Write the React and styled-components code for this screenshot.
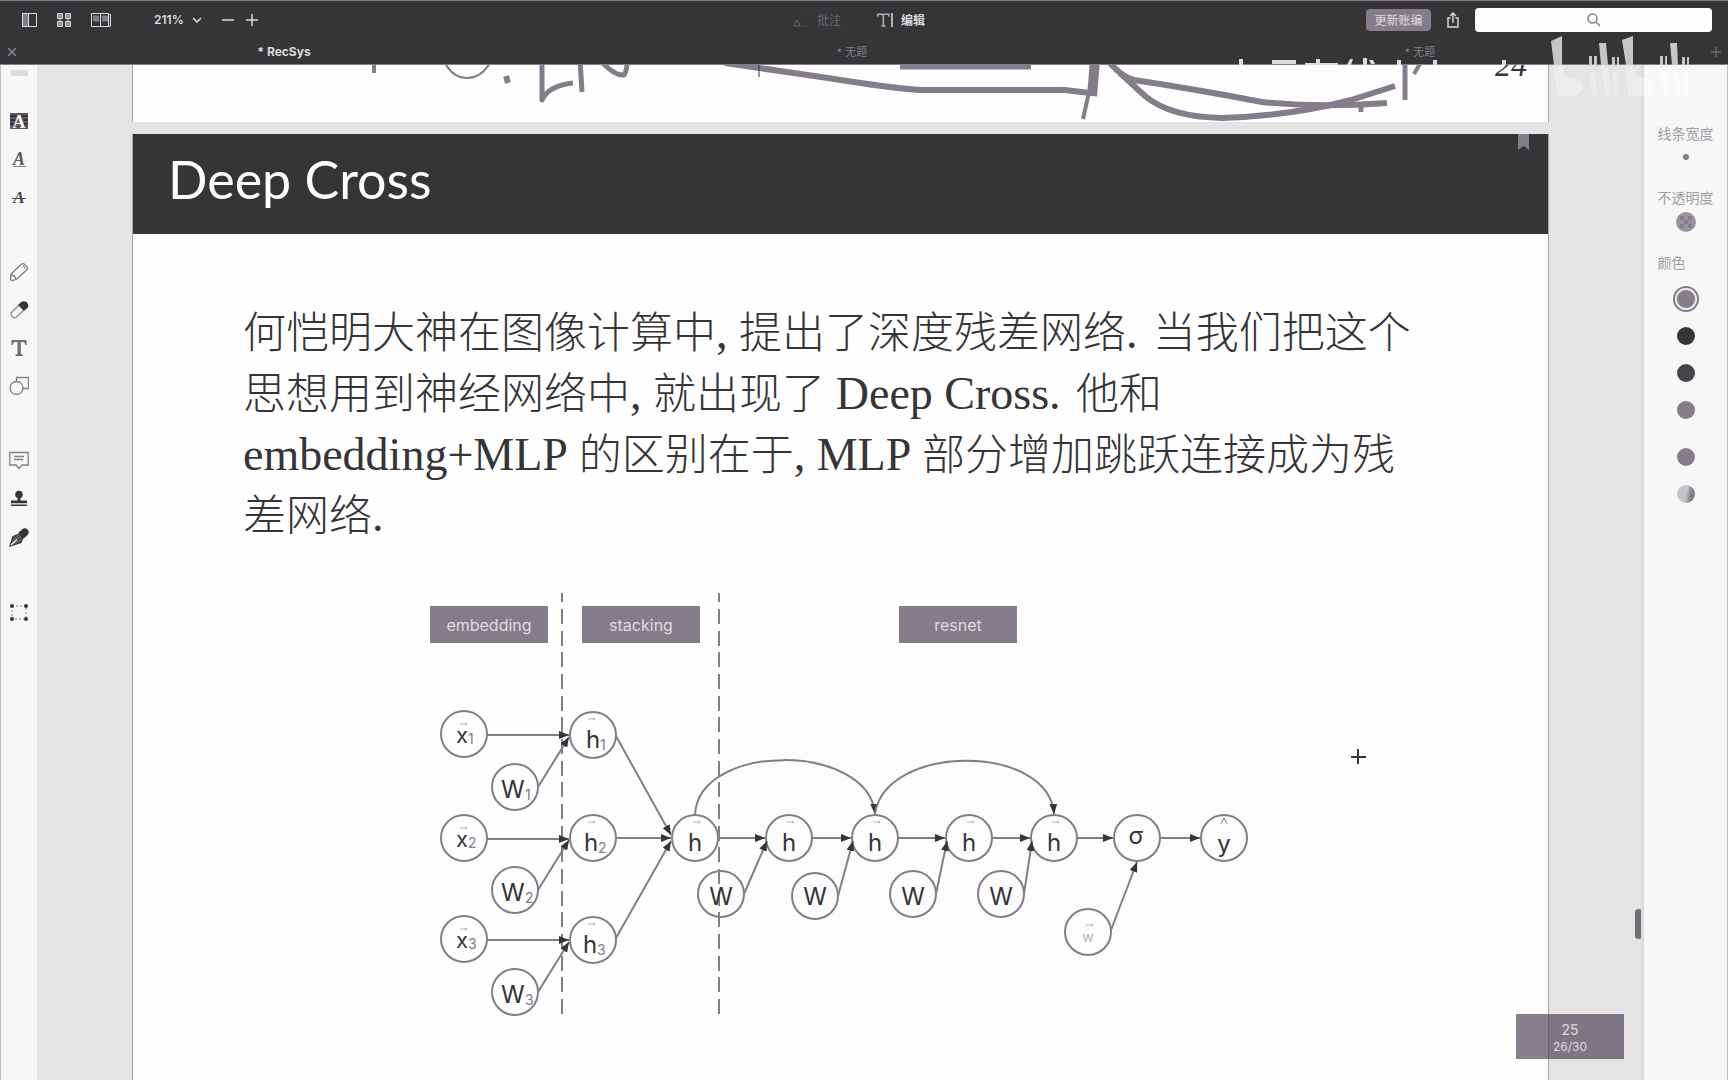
import React from "react";
import styled, { createGlobalStyle } from "styled-components";

const ink = "#353436";
const mauve = "#857c8a";
const ui = `Inter, Roboto, "Noto Sans CJK SC", sans-serif`;

const Global = createGlobalStyle`
  * { box-sizing: border-box; }
  body { margin: 0; background: ${ink}; font-family: ${ui}; color: ${ink}; }
  button { border: 0; padding: 0; background: none; font: inherit; color: inherit; cursor: pointer; }
  svg { display: block; flex: none; }
`;

const Window = styled.div`
  position: relative;
  display: flex;
  flex-direction: column;
  height: 100vh;
  overflow: hidden;
`;

const Toolbar = styled.header`
  display: grid;
  grid-template-columns: 1fr auto 1fr;
  align-items: center;
  height: 40px;
  flex: none;
  padding: 0 16px 2px 22px;
  border-top: 1px solid ${mauve};
  background: ${ink};
  color: #dcdcdc;
`;

const ToolGroup = styled.div`
  display: flex;
  align-items: center;
  justify-content: ${(p) => p.$justify || "flex-start"};
  gap: ${(p) => p.$gap}px;
`;

const BarButton = styled.button`
  display: flex;
  align-items: center;
  gap: 8px;
  height: 24px;
  font-size: 12px;
  font-weight: ${(p) => (p.$strong ? 600 : 400)};
  color: ${(p) => (p.$dim ? "#6b6570" : "#dcdcdc")};
`;

const ViewButtons = styled(ToolGroup)`
  margin-right: 43px;
`;

const Mode = styled(ToolGroup)`
  padding-right: 16px;
`;

const UpdateButton = styled.button`
  height: 22px;
  width: 65px;
  border-radius: 4px;
  background: ${mauve};
  color: #dcdcdc;
  font-size: 12px;
`;

const SearchBox = styled.label`
  position: relative;
  display: flex;
  width: 237px;
  height: 24px;
  svg { position: absolute; left: 50%; top: 50%; transform: translate(-50%, -50%); }
`;

const SearchInput = styled.input`
  width: 100%;
  border: 0;
  border-radius: 4px;
  background: #fefefe;
  font: 13px ${ui};
  padding: 0 8px;
`;

const TabBar = styled.nav`
  display: flex;
  height: 24px;
  flex: none;
  background: ${ink};
`;

const Tab = styled.button`
  position: relative;
  flex: 1;
  font-size: ${(p) => (p.$active ? 12 : 11)}px;
  line-height: 24px;
  font-weight: ${(p) => (p.$active ? 700 : 400)};
  color: ${(p) => (p.$active ? "#dcdcdc" : mauve)};
`;

const TabEdge = styled.button`
  width: 24px;
  display: grid;
  place-items: center;
  color: ${mauve};
`;

const CloseTab = styled(TabEdge)`
  position: absolute;
  left: 0;
  top: 40px;
  height: 24px;
`;

const Workspace = styled.div`
  display: flex;
  flex: 1;
  min-height: 0;
  border-top: 1px solid ${mauve};
`;

const ToolRail = styled.aside`
  display: flex;
  flex-direction: column;
  align-items: center;
  gap: 37px;
  width: 37px;
  flex: none;
  background: #f7f7f7;
  border-left: 1px solid #c4c2c5;
`;

const Handle = styled.div`
  width: 17px;
  height: 6px;
  margin: 5px 0 -11px;
  background: #dcdcdc;
`;

const RailGroup = styled.div`
  display: flex;
  flex-direction: column;
`;

const RailButton = styled.button`
  display: grid;
  place-items: center;
  width: 36px;
  height: 38px;
`;

const Viewer = styled.main`
  position: relative;
  flex: 1;
  min-width: 0;
  overflow: hidden;
  padding: 0 92px 0 95px;
  background: #e4e4e4;
  border-right: 3px solid #dcdcdc;
`;

const Sheet = styled.section`
  position: relative;
  background: #fefefe;
  border-left: 1px solid #a7a3a9;
  border-right: 1px solid #a7a3a9;
`;

const PreviousSheet = styled(Sheet)`
  margin-bottom: 12px;
  svg { width: 100%; }
`;

const SlideTitle = styled.h1`
  margin: 0;
  padding: 0 35px;
  background: ${ink};
  color: #fefefe;
  height: 100px;
  font: 400 52px/90px Lato, "Open Sans", sans-serif;
`;

const Bookmark = styled.svg`
  position: absolute;
  right: 19px;
  top: 0;
`;

const Paragraph = styled.p`
  margin: 0;
  padding: 69px 80px 33px 110px;
  font: 300 43px/61px "Liberation Serif", "Noto Sans CJK SC", serif;
  white-space: nowrap;
`;

const Latin = styled.span`
  font-size: 46px;
  line-height: 1;
`;

const Diagram = styled.svg`
  width: 100%;
  font-family: ${ui};
`;

const PageBadge = styled.div`
  position: absolute;
  right: 17px;
  bottom: 21px;
  width: 108px;
  height: 45px;
  padding-top: 7px;
  background: rgba(70, 60, 78, 0.65);
  color: #dcdcdc;
  text-align: center;
  font-size: 14px;
  line-height: 17px;
`;

const BadgeTotal = styled.div`
  font-size: 12px;
`;

const ScrollThumb = styled.div`
  position: absolute;
  right: -1px;
  top: 844px;
  width: 7px;
  height: 30px;
  border-radius: 4px;
  background: #746b79;
`;

const StyleRail = styled.aside`
  display: flex;
  flex-direction: column;
  align-items: center;
  width: 84px;
  flex: none;
  padding-top: 59px;
  background: #f7f7f7;
  border-right: 1px solid #c4c2c5;
`;

const RailLabel = styled.div`
  width: 56px;
  height: 20px;
  font-size: 14px;
  line-height: 20px;
  color: #a19ba4;
`;

const Slot = styled.div`
  display: grid;
  place-items: center;
  height: ${(p) => p.$h}px;
`;

const Swatches = styled.fieldset`
  display: flex;
  flex-direction: column;
  align-items: center;
  margin: 0;
  padding: 7px 0 0;
  border: 0;
`;

const SwatchCell = styled.label`
  display: grid;
  place-items: center;
  height: 37px;
  margin-top: ${(p) => (p.$apart ? 10 : 0)}px;
`;

const Swatch = styled.input`
  appearance: none;
  margin: 0;
  width: 18px;
  height: 18px;
  border-radius: 50%;
  background: ${(p) => p.$fill};
  &:checked { box-shadow: 0 0 0 1px #dcdcdc, 0 0 0 2px #f7f7f7, 0 0 0 4px ${mauve}; }
`;

const Watermark = styled.svg`
  position: absolute;
  right: 0;
  top: 30px;
  pointer-events: none;
`;

/* ---------- icons ---------- */

const Icon = ({ w = 20, h = 20, children, ...rest }) => (
  <svg width={w} height={h} viewBox={`0 0 ${w} ${h}`} fill="none" stroke={ink} strokeWidth="1" aria-hidden="true" {...rest}>
    {children}
  </svg>
);

const SidebarIcon = () => (
  <Icon w={15} h={14} stroke="#dcdcdc">
    <rect x="0.5" y="0.5" width="14" height="13" />
    <rect x="1" y="1" width="5" height="12" fill={mauve} stroke="none" />
    <path d="M6.5 1v12" />
  </Icon>
);
const GridIcon = () => (
  <Icon w={14} h={14} stroke="#dcdcdc">
    <path d="M.5.5h5v5h-5zM8.500.5h5v5h-5zM.5 8.500h5v5h-5zM8.500 8.500h5v5h-5z" fill={mauve} />
    <path d="M2 3h2M10 3h2M2 11h2M10 11h2M3 6v2M11 6v2" />
  </Icon>
);
const BookIcon = () => (
  <Icon w={20} h={14} stroke="#dcdcdc">
    <path d="M.5.5h9v13h-9zM9.500.5h8v13h-8zM17.500 1.500h2v12h-2" />
    <path d="M2 4h6M2 7h6M11 4h6M11 7h6" stroke={mauve} strokeWidth="3" />
  </Icon>
);
const ChevronIcon = () => (
  <Icon w={10} h={6} stroke="#dcdcdc" strokeWidth="1.600"><path d="M1 1l4 4 4-4" /></Icon>
);
const MinusIcon = () => (
  <Icon w={12} h={12} stroke="#dcdcdc" strokeWidth="1.500"><path d="M0 6h12" /></Icon>
);
const PlusIcon = ({ size = 12, color = "#dcdcdc" }) => (
  <Icon w={12} h={12} stroke={color} strokeWidth={size === 12 ? 1.5 : 1}>
    <path d={size === 12 ? "M0 6h12M6 0v12" : "M1 6h10M6 1v10"} />
  </Icon>
);
const MarkIcon = () => (
  <Icon w={16} h={16} stroke="#6b6570"><path d="M1 14l3-6 2 3 1 3zM9 14h1M13 14h1M15 1v1" /></Icon>
);
const TextCursorIcon = () => (
  <Icon w={16} h={14} stroke="#b5b0b7" strokeWidth="1.500">
    <path d="M.8 3.500V1.200h11v2.300M6.300 1.200v11.500M4.500 13h4" />
    <path d="M15 0v14" stroke="#dcdcdc" />
  </Icon>
);
const ShareIcon = () => (
  <Icon w={12} h={16} stroke="#dcdcdc" strokeWidth="1.400">
    <path d="M3.500 6H1v9h10V6H8.500M6 11V1.500M3 4l3-3 3 3" />
  </Icon>
);
const SearchIcon = () => (
  <Icon w={14} h={14} stroke={mauve} strokeWidth="1.500"><circle cx="5.500" cy="5.500" r="4.500" /><path d="M9 9l4 4" /></Icon>
);

const Letter = (p) => (
  <text x="10" y="17" textAnchor="middle" fontFamily="Liberation Serif, serif" fontWeight="700" stroke="none" {...p} />
);
const HighlightIcon = () => (
  <Icon>
    <rect x="1" y="2" width="18" height="16" fill="#5c5660" stroke="none" />
    <path d="M1 5h7M12 5h7M1 9h5M14 9h5M1 13h4M15 13h4" stroke={ink} strokeWidth="2" />
    <Letter fontSize="18" fill="#f7f7f7">A</Letter>
  </Icon>
);
const UnderlineIcon = () => (
  <Icon><Letter fontSize="18" fontStyle="italic" y="16" fill="#5c5660">A</Letter><path d="M4 17.500h13" stroke={mauve} /></Icon>
);
const StrikeIcon = () => (
  <Icon><Letter fontSize="17" fontStyle="italic" y="16" fill="#4a464c">A</Letter><path d="M3 11.500h14" stroke="#4a464c" /></Icon>
);
const PencilIcon = () => (
  <Icon stroke={mauve} strokeWidth="1.300">
    <path d="M2 12L12 2.500q1.500-1.500 3-.5l3 2.500q1 1.500 0 3L8 17l-4 1.500q-2 .5-2.500-1.500zM14 4l2.500 2.500M2.500 13q3 0 4.500 4" />
  </Icon>
);
const EraserIcon = () => (
  <Icon stroke={mauve} strokeWidth="1.200">
    <path d="M2 13l8-8 5 5-8 7.500q-2 1-3.500-.5T2 13z" />
    <path d="M10 5l2.500-2.500q3-1.500 5 .5t.5 4.500L15 10z" fill={ink} stroke={ink} />
  </Icon>
);
const TypeIcon = () => (
  <Icon stroke="none" fill="#746c79"><path d="M2.500 2h15v5h-1.200q-.3-3-2.500-3h-2v11.500q0 1 2 1V18H6.500v-1.500q2 0 2-1V4h-2.200q-2.200 0-2.500 3H2.500z" /></Icon>
);
const ShapesIcon = () => (
  <Icon stroke={mauve} strokeWidth="1.300"><circle cx="7.500" cy="12" r="6.500" /><path d="M7.500 5V1.500h12v11H14" /></Icon>
);
const NoteIcon = () => (
  <Icon stroke={mauve} strokeWidth="1.300"><path d="M.8 1.500h18.400v12.500H13l-3 3.500L7 14H.8zM5 5.500h10M5 8.500h9" /></Icon>
);
const StampIcon = () => (
  <Icon stroke="none" fill={ink}><circle cx="10" cy="5.500" r="3.800" /><path d="M8.500 8h3v3.500H18v2.700H2v-2.700h6.500zM2 15.500h16V17H2z" /></Icon>
);
const PenIcon = () => (
  <Icon stroke={ink} strokeWidth="1.200">
    <path d="M1 19l3-9.500L11 7l3 3-2 5.500z" fill="#5c5660" /><path d="M10 6l4-3.500q2-1.500 4 .5t.5 4L14.500 11z" fill={ink} /><path d="M2 18l6-5.500" stroke="#f7f7f7" />
  </Icon>
);
const SelectIcon = () => (
  <Icon stroke={mauve}>
    <rect x="3" y="4" width="14" height="13" strokeDasharray="2 2" />
    <g fill={ink} stroke="none"><circle cx="3" cy="4" r="2" /><circle cx="17" cy="4" r="2" /><circle cx="3" cy="17" r="2" /><circle cx="17" cy="17" r="2" /></g>
  </Icon>
);

const railGroups = [
  [["高亮", HighlightIcon], ["下划线", UnderlineIcon], ["删除线", StrikeIcon]],
  [["铅笔", PencilIcon], ["橡皮擦", EraserIcon], ["文本", TypeIcon], ["形状", ShapesIcon]],
  [["批注", NoteIcon], ["图章", StampIcon], ["签名", PenIcon]],
  [["选择", SelectIcon]],
];

const swatches = [
  { fill: mauve, name: "紫" },
  { fill: ink, name: "黑" },
  { fill: "#454347", name: "深灰" },
  { fill: mauve, name: "灰紫" },
  { fill: mauve, name: "自定义", apart: true },
  { fill: `linear-gradient(100deg, #c6c3c8 50%, ${mauve} 75%)`, name: "色轮" },
];

/* ---------- handwriting on the sheet above ---------- */

const Handwriting = () => (
  <svg viewBox="133 65 1415 57" fill="none" stroke={mauve} strokeWidth="6" strokeLinejoin="round" aria-hidden="true">
    <path d="M374 60v13" strokeWidth="4" />
    <path d="M445 63q8 15 22 15t23-15" strokeWidth="2" />
    <path d="M506 76l2 7" />
    <path d="M542 60v40q6-14 31-17" strokeWidth="5" />
    <path d="M580 60l2 32M600 60q14 16 24 15 3-4 3-14" strokeWidth="5" />
    <path d="M725 63L828 78Q890 88 920 90H1065L1090 93" />
    <path d="M759 65v12" stroke={ink} strokeWidth="1" />
    <path d="M900 67h131" strokeWidth="5" />
    <path d="M1095 60L1092 96" strokeWidth="10" />
    <path d="M1089 92L1083 119" strokeWidth="4" />
    <path d="M1109 62Q1122 77 1134 80Q1200 90 1262 102Q1320 108 1387 103" />
    <path d="M1120 73L1145 96Q1170 117 1222 118Q1290 116 1351 100L1395 86" />
    <path d="M1405 60v40M1361 106v6" strokeWidth="5" />
    <path d="M1414 74L1421 62" strokeWidth="4" />
    <text x="1495" y="76" fontSize="32" fontStyle="italic" fontFamily="Liberation Serif, serif" fill={ink} stroke="none">24</text>
  </svg>
);

/* ---------- network diagram ---------- */

const R = 23;
const inputs = [
  { y: 734, hy: 735, wy: 787, n: 1, hx: 587 },
  { y: 838, hy: 838, wy: 890, n: 2, hx: 585 },
  { y: 939, hy: 940, wy: 992, n: 3, hx: 584 },
];
const hidden = [695, 789, 875, 969, 1054];
const weights = [
  { x: 721, y: 894 },
  { x: 815, y: 896 },
  { x: 913, y: 894 },
  { x: 1001, y: 894 },
];
const tags = [
  { x: 430, label: "embedding" },
  { x: 582, label: "stacking" },
  { x: 899, label: "resnet" },
];

const Node = ({ x, y }) => <circle cx={x} cy={y} r={R} fill="none" stroke={mauve} strokeWidth="2" />;
const Edge = ({ d }) => <path d={d} fill="none" stroke={mauve} strokeWidth="2" markerEnd="url(#head)" />;
const Vec = ({ x, y }) => <path d={`M${x - 4} ${y}h7m-2-1l2 1l-2 1`} fill="none" stroke="#b9b5bb" />;
const T = ({ small, ...p }) => <text fontSize={small ? 14 : 24} fill={small ? mauve : ink} {...p} />;

const Network = () => (
  <Diagram viewBox="133 580 1415 500" role="img" aria-label="Deep Cross">
    <defs>
      <marker id="head" viewBox="0 0 10 8" refX="10" refY="4" markerWidth="10" markerHeight="8" markerUnits="userSpaceOnUse" orient="auto">
        <path d="M0 0L10 4L0 8z" fill={ink} />
      </marker>
    </defs>
    <rect x="719" y="680" width="543" height="280" fill="#fcfcfc" />
    {tags.map((t) => (
      <g key={t.label}>
        <rect x={t.x} y="606" width="118" height="37" fill={mauve} />
        <text x={t.x + 59} y="631" textAnchor="middle" fontSize="16" fill="#dcdcdc">{t.label}</text>
      </g>
    ))}
    {[562, 719].map((x) => (
      <path key={x} d={`M${x} 593V1020`} stroke={mauve} strokeWidth="2" strokeDasharray="15 7 15 7 15 6" strokeDashoffset="6" />
    ))}
    {inputs.map((r) => (
      <g key={r.n}>
        <Node x={464} y={r.y} /><Node x={515} y={r.wy} /><Node x={593} y={r.hy} />
        <Edge d={`M487 ${r.y + 1}H569`} />
        <Edge d={`M538 ${r.wy}L569 ${r.hy + 2}`} />
        <Vec x={464} y={r.y - 10} /><Vec x={592} y={r.hy - 16} />
        <T x="456" y={r.y + 9} fontSize="22">x</T><T small x="468" y={r.y + 10}>{r.n}</T>
        <T x="501" y={r.wy + 11}>W</T><T small x="525" y={r.wy + 13}>{r.n}</T>
        <T x={r.hx - 1} y={r.hy + 13}>h</T><T small x={r.hx + 13} y={r.hy + 15}>{r.n}</T>
      </g>
    ))}
    <Edge d="M616 736L671 835" />
    <Edge d="M616 838H671" />
    <Edge d="M616 938L671 841" />
    {hidden.map((x, i) => (
      <g key={x}>
        <Node x={x} y={838} />
        <Vec x={x + 2} y={822} />
        <T x={x} y="851" textAnchor="middle">h</T>
        {i < 4 && <Edge d={`M${x + R} 838H${hidden[i + 1] - R - 1}`} />}
      </g>
    ))}
    {weights.map((w, i) => (
      <g key={w.x}>
        <Node x={w.x} y={w.y} />
        <T x={w.x} y="905" textAnchor="middle">W</T>
        <Edge d={`M${w.x + R} ${w.y}L${hidden[i + 1] - R + 1} 841`} />
      </g>
    ))}
    <Edge d="M695 815C698 742 869 742 875 814" />
    <Edge d="M875 814C885 743 1049 743 1054 814" />
    <Edge d="M1077 838H1113" />
    <Edge d="M1160 838H1200" />
    <Edge d="M1111 930L1137 862" />
    <Node x={1137} y={838} /><Node x={1224} y={838} /><Node x={1088} y={932} />
    <T x="1136" y="844" textAnchor="middle">σ</T>
    <T x="1224" y="852" textAnchor="middle">y</T>
    <path d="M1221 824l3-6l3 6" fill="none" stroke={mauve} />
    <T small x="1088" y="942" textAnchor="middle" fill="#b5b1b7">w</T>
    <Vec x={1090} y={925} />
    <path d="M1351 757h15M1358 749v15" stroke={ink} strokeWidth="2" />
  </Diagram>
);

/* ---------- channel watermark laid over the window corner ---------- */

const LOGO = "M1551 41L1562 36V65H1554zM1589 56h3v9h-3zM1594 56h3v9h-3zM1599 43h7l2 22h-7zM1612 57h3v8h-3zM1617 57h2v8h-2zM1622 40L1633 36V65H1626zM1660 56h3v9h-3zM1665 56h2v9h-2zM1670 43h7l1 22h-6zM1682 57h3v8h-3zM1687 57h2v8h-2z";
const LOGO_LOW = "M1554 66h9l2 12q18-2 18 9t-26 9zM1590 72h5l2 23h-5zM1602 66h6l3 29h-6zM1613 72h5l1 23h-5zM1626 66h8l2 12q18-2 18 9t-26 9zM1661 72h5l2 23h-5zM1673 66h5l3 29h-5zM1684 72h5l1 23h-5z";

const ChannelMark = () => (
  <Watermark width="500" height="70" viewBox="1228 30 500 70" aria-hidden="true">
    <path d={LOGO} fill="#c8c5c9" />
    <path d={LOGO_LOW} fill="#fefefe" opacity="0.350" />
    <path d="M1239 59h4v6h-4zM1272 60h24v4h-24zM1305 63h33v2h-33zM1316 59h4v4h-4zM1350 59h3l-2 6h-4zM1363 58h4v7h-4zM1369 60h4l2 4h-4zM1397 60h4v5h-4zM1433 60h4v5h-4zM1502 60h4v5h-4z" fill="#dcdcdc" />
  </Watermark>
);

export default function App() {
  return (
    <>
      <Global />
      <Window>
        <Toolbar>
          <ToolGroup $gap={0}>
            <ViewButtons $gap={20}>
              <BarButton aria-label="侧边栏"><SidebarIcon /></BarButton>
              <BarButton aria-label="缩略图"><GridIcon /></BarButton>
              <BarButton aria-label="双页"><BookIcon /></BarButton>
            </ViewButtons>
            <ToolGroup $gap={20}>
              <BarButton $strong>211% <ChevronIcon /></BarButton>
              <ToolGroup $gap={12}>
                <BarButton aria-label="缩小"><MinusIcon /></BarButton>
                <BarButton aria-label="放大"><PlusIcon /></BarButton>
              </ToolGroup>
            </ToolGroup>
          </ToolGroup>
          <Mode $gap={36}>
            <BarButton $dim><MarkIcon /> 批注</BarButton>
            <BarButton $strong><TextCursorIcon /> 编辑</BarButton>
          </Mode>
          <ToolGroup $gap={16} $justify="flex-end">
            <UpdateButton>更新账编</UpdateButton>
            <BarButton aria-label="分享"><ShareIcon /></BarButton>
            <SearchBox>
              <SearchInput type="search" aria-label="搜索" />
              <SearchIcon />
            </SearchBox>
          </ToolGroup>
        </Toolbar>
        <TabBar>
          <Tab $active>* RecSys</Tab>
          <Tab>* 无题</Tab>
          <Tab>* 无题</Tab>
          <TabEdge aria-label="新建标签页"><PlusIcon size={10} color={mauve} /></TabEdge>
        </TabBar>
        <CloseTab aria-label="关闭标签页">
          <Icon w={8} h={8} stroke={mauve} strokeWidth="1.600"><path d="M0 0l8 8M8 0L0 8" /></Icon>
        </CloseTab>
        <Workspace>
          <ToolRail>
            <Handle />
            {railGroups.map((group, i) => (
              <RailGroup key={i}>
                {group.map(([name, Glyph]) => (
                  <RailButton key={name} aria-label={name}><Glyph /></RailButton>
                ))}
              </RailGroup>
            ))}
          </ToolRail>
          <Viewer>
            <PreviousSheet><Handwriting /></PreviousSheet>
            <Sheet>
              <SlideTitle>Deep Cross</SlideTitle>
              <Bookmark width="11" height="16" viewBox="0 0 11 16" aria-hidden="true">
                <path d="M0 0h11v16l-5-4l-6 4z" fill={mauve} />
              </Bookmark>
              <Paragraph>
                何恺明大神在图像计算中<Latin>, </Latin>提出了深度残差网络<Latin>.{"\u2004"}</Latin>当我们把这个<br />
                思想用到神经网络中<Latin>, </Latin>就出现了 <Latin>Deep Cross.{"\u2004"}</Latin>他和<br />
                <Latin>embedding+MLP</Latin> 的区别在于<Latin>, MLP</Latin> 部分增加跳跃连接成为残<br />
                差网络<Latin>.</Latin>
              </Paragraph>
              <Network />
            </Sheet>
            <ScrollThumb />
            <PageBadge>25<BadgeTotal>26/30</BadgeTotal></PageBadge>
          </Viewer>
          <StyleRail>
            <RailLabel>线条宽度</RailLabel>
            <Slot $h={25}>
              <Icon w={6} h={6} stroke="none"><circle cx="3" cy="3" r="3" fill={mauve} /></Icon>
            </Slot>
            <Slot $h={19} />
            <RailLabel>不透明度</RailLabel>
            <Slot $h={28}>
              <Icon w={20} h={20} stroke="none">
                <circle cx="10" cy="10" r="10" fill="#9a939e" />
                <path d="M4 4h4v4H4zM12 4h4v4h-4zM8 8h4v4H8zM4 12h4v4H4zM12 12h4v4h-4z" fill="#857c8a" />
              </Icon>
            </Slot>
            <Slot $h={17} />
            <RailLabel>颜色</RailLabel>
            <Swatches aria-label="颜色">
              {swatches.map((s, i) => (
                <SwatchCell key={s.name} $apart={s.apart}>
                  <Swatch type="radio" name="color" aria-label={s.name} $fill={s.fill} defaultChecked={i === 0} />
                </SwatchCell>
              ))}
            </Swatches>
          </StyleRail>
        </Workspace>
        <ChannelMark />
      </Window>
    </>
  );
}
